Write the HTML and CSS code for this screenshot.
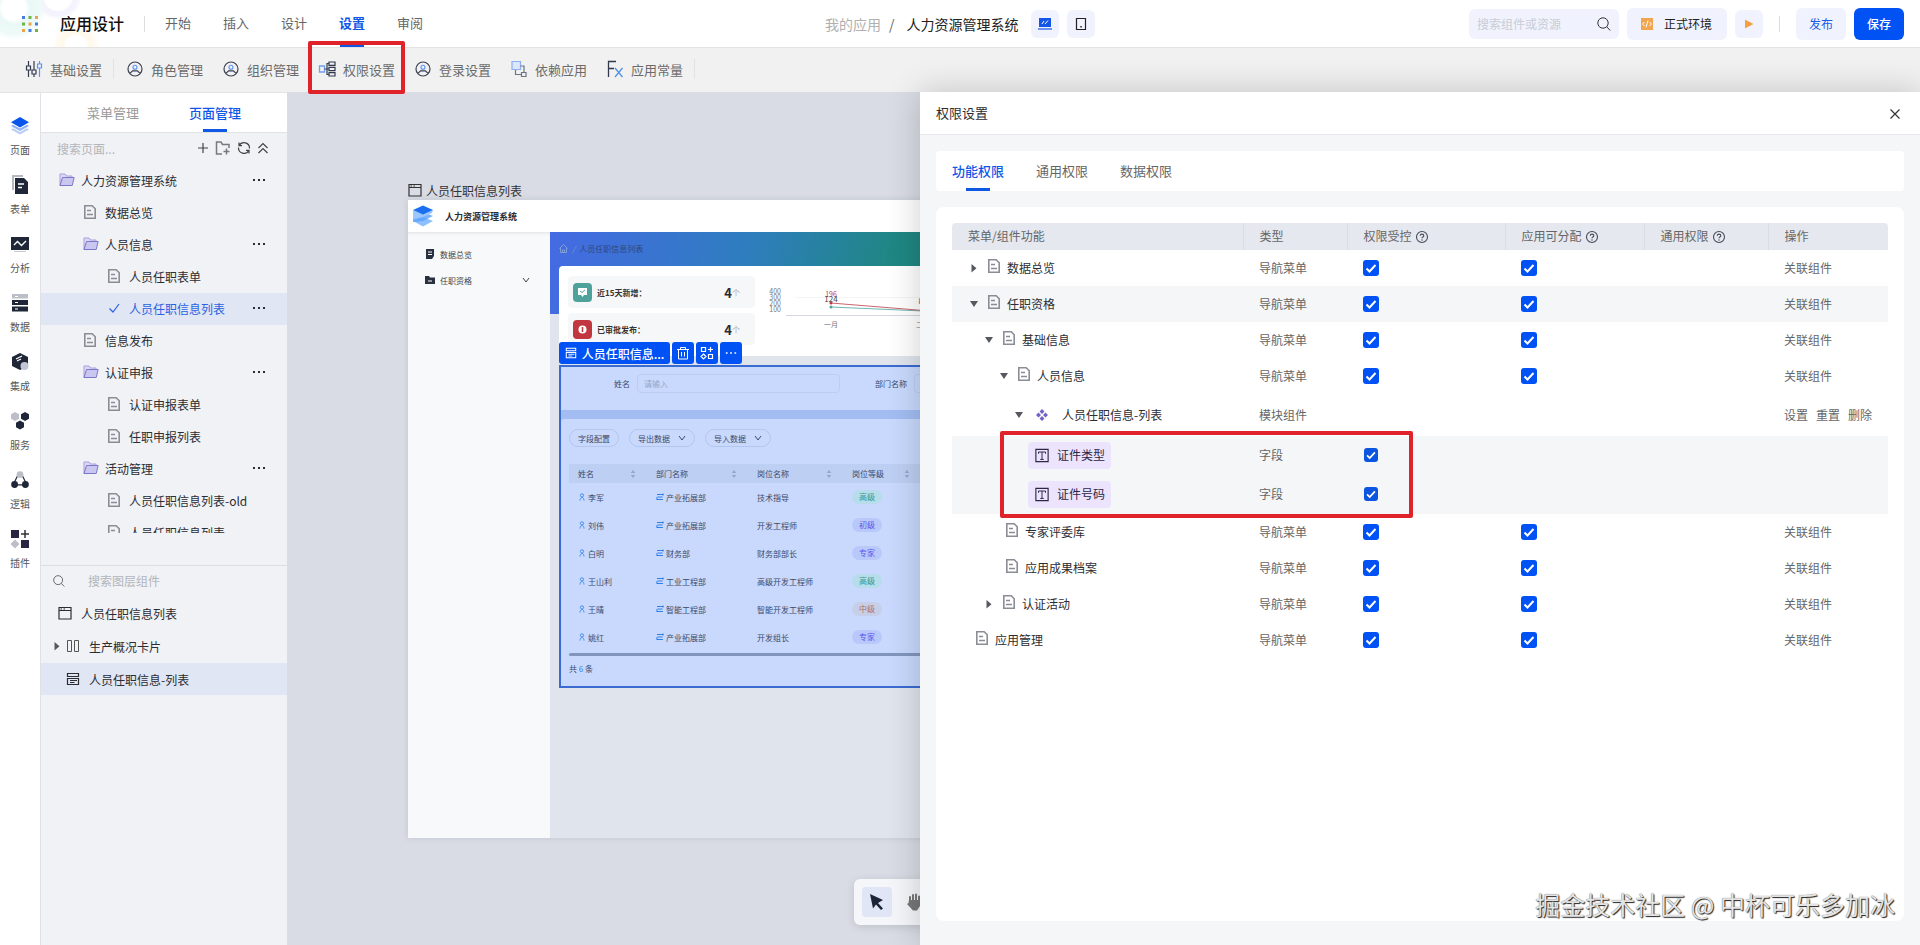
FILE: index.html
```
<!DOCTYPE html>
<html lang="zh-CN">
<head>
    <meta charset="UTF-8">
    <meta name="viewport" content="width=device-width, initial-scale=1.0">
    <title>应用设计 - 人力资源管理系统</title>
    <link rel="stylesheet" href="styles.css">
</head>
<body>
    <!-- Icon sprite -->
    <svg class="sprite" aria-hidden="true">
        <symbol id="i-search" viewBox="0 0 14 14"><circle cx="6" cy="6" r="5.2" fill="none" stroke="currentColor"/><path d="M9.8 9.8l3.4 3.7" stroke="currentColor"/></symbol>
        <symbol id="i-user" viewBox="0 0 18 18"><circle cx="9" cy="9" r="7" fill="none" stroke="#3a3f52" stroke-width="1.2"/><circle cx="9" cy="7.2" r="2" fill="none" stroke="#5b93ee" stroke-width="1.1"/><path d="M4.2 13.2l2.4-2.4h4.8l2.4 2.4" fill="none" stroke="#3a3f52" stroke-width="1.2"/></symbol>
        <symbol id="i-doc" viewBox="0 0 14 16"><path d="M1.8 1.8h7.4l3 3v9.4H1.8z" fill="none" stroke="#8a8d96" stroke-width="1.6"/><path d="M4 6.5h4M4 10.500h6" stroke="#8a8d96" stroke-width="1.4"/></symbol>
        <symbol id="i-folder" viewBox="0 0 16 14"><path d="M1 12.500V1h5l1.500 2H13v2" fill="#dcd8f5" stroke="#a5a0dd"/><path d="M1 12.500L3.500 4.500H15.200l-2 8z" fill="#c9c6f0" stroke="#7d77c8"/></symbol>
        <symbol id="i-dots" viewBox="0 0 14 4"><path d="M1 1h2v2H1zM6 1h2v2H6zM11 1h2v2h-2z" fill="currentColor"/></symbol>
        <symbol id="i-help" viewBox="0 0 14 14"><circle cx="7" cy="7" r="5.500" fill="none" stroke="#444a58" stroke-width="1.100"/><path d="M5.200 5.800c0-2.300 3.600-2.300 3.600 0 0 1.300-1.800 1.200-1.800 2.400" fill="none" stroke="#444a58" stroke-width="1.100"/><circle cx="7" cy="10" r=".7" fill="#444a58"/></symbol>
        <symbol id="i-down" viewBox="0 0 12 12"><path d="M2 3h8l-4 6z" fill="#55585f"/></symbol>
        <symbol id="i-right" viewBox="0 0 12 12"><path d="M3.500 2v8.500L8.500 6.200z" fill="#55585f"/></symbol>
        <symbol id="i-chev" viewBox="0 0 8 8"><path d="M1 2l3 4 3-4" fill="none" stroke="currentColor"/></symbol>
        <symbol id="i-window" viewBox="0 0 14 14"><path d="M1 1.500h12v11.500H1zM1 4.500h12" fill="none" stroke="currentColor" stroke-width="1.200"/><path d="M2.500 3h1.500M5.500 3H7" stroke="currentColor"/></symbol>
        <symbol id="i-list" viewBox="0 0 14 14"><path d="M1.500 1.500h11v3h-11zM1.500 12.500v-6h11v6z" fill="none" stroke="currentColor" stroke-width="1.200"/><path d="M4 8.500h7M4 10.500h4.500" stroke="currentColor"/></symbol>
        <symbol id="i-text" viewBox="0 0 16 16"><path d="M1 1h14v14H1z" fill="none" stroke="#2c2748" stroke-width="1.300"/><path d="M4 6V4h8v2M8 4v8.500M6 12.500h4" fill="none" stroke="#2c2748" stroke-width="1.100"/></symbol>
        <symbol id="i-person" viewBox="0 0 8 10"><circle cx="4" cy="3" r="2" fill="none" stroke="#2f7fe8"/><path d="M1.500 9.500c0-5 5-5 5 0" fill="none" stroke="#2f7fe8"/></symbol>
        <symbol id="i-dept" viewBox="0 0 8 8"><path d="M1 1.500h6.500M1.500 4h5M.5 6.500h6.500M7 .5v2M1 4v2.500" fill="none" stroke="#2f7fe8"/></symbol>
        <symbol id="i-sort" viewBox="0 0 6 8"><path d="M3 0l2.200 3H.8zM3 8L.8 5h4.400z" fill="#93a6cf"/></symbol>
    </svg>

    <header class="topbar">
        <svg class="apps" viewBox="0 0 16 16"><path fill="#4a7be0" d="M0 0h3v3H0zM13 6.500h3v3h-3zM6.500 13h3v3h-3z"/><path fill="#6cb644" d="M6.500 0h3v3h-3zM0 6.500h3v3H0zM13 13h3v3h-3z"/><path fill="#eda34a" d="M13 0h3v3h-3zM6.500 6.500h3v3h-3zM0 13h3v3H0z"/></svg>
        <h1 class="app-title">应用设计</h1>
        <span class="divider"></span>
        <nav class="main-nav">
            <a href="#">开始</a>
            <a href="#">插入</a>
            <a href="#">设计</a>
            <a href="#" class="active">设置</a>
            <a href="#">审阅</a>
        </nav>
        <div class="crumbs">
            <a href="#">我的应用</a>
            <span class="slash">/</span>
            <span class="current">人力资源管理系统</span>
            <button class="icon-btn" aria-label="电脑端"><svg width="14" height="12" viewBox="0 0 14 12"><path d="M1 0h12v9H1z" fill="#1457e8"/><path d="M0 11h14" stroke="#1457e8" stroke-width="1.200"/><path d="M4 6l2-3M7 6l3-3.500" stroke="#fff"/></svg></button>
            <button class="icon-btn" aria-label="移动端"><svg width="12" height="14" viewBox="0 0 12 14"><path d="M1.500 1.500h9v11h-9z" fill="none" stroke="#222" stroke-width="1.200"/><path d="M5.300 9h1.500v1.500H5.300z" fill="#222"/></svg></button>
        </div>
        <div class="actions">
            <label class="search-box">
                <input type="text" placeholder="搜索组件或资源" aria-label="搜索组件或资源">
                <svg width="14" height="14"><use href="#i-search"/></svg>
            </label>
            <button class="env-btn"><svg width="12" height="12" viewBox="0 0 12 12"><path d="M0 0h12v12H0z" fill="#f0a54e"/><path d="M3.500 4L1.500 6l2 2M8.500 4l2 2-2 2M7 2.500l-2 7" fill="none" stroke="#fff"/></svg>正式环境</button>
            <button class="icon-btn" aria-label="运行"><svg width="10" height="10" viewBox="0 0 10 10"><path d="M1 .5L9.500 5 1 9.500z" fill="#f5a142"/></svg></button>
            <span class="divider"></span>
            <button class="publish-btn">发布</button>
            <button class="save-btn">保存</button>
        </div>
    </header>

    <div class="toolbar">
        <a href="#" class="tool"><svg viewBox="0 0 18 18"><path d="M3.500 1v5M3.500 10v7M1.500 6h4v4h-4zM9 1v9M9 14v3M7 10h4v4H7z" fill="none" stroke="#333a4d" stroke-width="1.200"/><path d="M14.500 1v3M14.500 8v9M12.500 4h4v4h-4z" fill="none" stroke="#5b93ee" stroke-width="1.200"/></svg>基础设置</a>
        <span class="tool-line"></span>
        <a href="#" class="tool"><svg><use href="#i-user"/></svg>角色管理</a>
        <a href="#" class="tool"><svg><use href="#i-user"/></svg>组织管理</a>
        <a href="#" class="tool marked"><svg viewBox="0 0 18 18"><path d="M1.500 6h5v6h-5z" fill="none" stroke="#6f9fee" stroke-width="1.300"/><path d="M6.500 9h4M9 9V3.500h2M9 9v5.500h2M11 2h6v3.300h-6zM11 7.300h6v3.400h-6zM11 12.700h6V16h-6z" fill="none" stroke="#333a4d" stroke-width="1.200"/></svg>权限设置</a>
        <a href="#" class="tool"><svg><use href="#i-user"/></svg>登录设置</a>
        <a href="#" class="tool"><svg viewBox="0 0 18 18"><path d="M2 1.500h8.500v8H2z" fill="#dde7fb" stroke="#8daeef" stroke-width="1.200"/><path d="M11.500 12.500H16v4h-4.500zM5.500 10v4.500H11M10.500 6H14v6" fill="none" stroke="#6c7385" stroke-width="1.200"/></svg>依赖应用</a>
        <a href="#" class="tool"><svg viewBox="0 0 18 18"><path d="M2.500 17V1.500H10M2.500 8.500H8" fill="none" stroke="#333a4d" stroke-width="1.300"/><path d="M9 8l7.500 9M16.500 8L9 17" fill="none" stroke="#4d93ea" stroke-width="1.300"/></svg>应用常量</a>
        <span class="tool-line"></span>
    </div>

    <div class="workspace">
        <nav class="rail">
            <button><svg viewBox="0 0 18 20"><path d="M0 13.500l9 5 9-5-2-1.200-7 3.700-7-3.700z" fill="#b9cdf8"/><path d="M0 10l9 5 9-5-2-1.200-7 3.700-7-3.700z" fill="#8fb0f5"/><path d="M9 1l9 5.300-9 5.300-9-5.300z" fill="#0a56ea"/></svg>页面</button>
            <button><svg viewBox="0 0 18 20"><path d="M2 15V1h10" fill="none" stroke="#b4b8c2" stroke-width="2"/><path d="M4 3h9l4 4v12H4z" fill="#1f2637"/><path d="M7 9h6M7 12.500h4" stroke="#fff" stroke-width="1.400"/></svg>表单</button>
            <button><svg viewBox="0 0 18 20"><path d="M0 3h18v13H0z" fill="#1f2637"/><path d="M3 11l3.500-3.500 4 4L15 7" fill="none" stroke="#fff" stroke-width="1.400"/><path d="M3 17.500h12" stroke="#c5c8d0"/></svg>分析</button>
            <button><svg viewBox="0 0 18 20"><path d="M1 1h16v4.500H1z" fill="#bcbfc8"/><path d="M1 7h16v5H1zM1 13.500h16v5H1z" fill="#1f2637"/><path d="M4 3.500h3M4 9.500h3M4 16h3" stroke="#fff" stroke-width="1.200"/></svg>数据</button>
            <button><svg viewBox="0 0 18 20"><path d="M9 1l8 4v9l-8 4-8-4V5z" fill="#1f2637"/><path d="M5 7l6-3M6 9l4-2" stroke="#fff" stroke-width="1.200"/><circle cx="13.500" cy="14" r="4" fill="#c3c5d4"/></svg>集成</button>
            <button><svg viewBox="0 0 18 20"><path d="M4 1l4 2.200v4.600L4 10 0 7.800V3.200z" fill="#bcbfc8"/><path d="M14 1l4 2.200v4.600L14 10l-4-2.200V3.200zM9 9.500l4 2.200v4.600l-4 2.200-4-2.200v-4.600z" fill="#1f2637"/></svg>服务</button>
            <button><svg viewBox="0 0 20 20"><path d="M8 4L3.500 13M12 4l4.500 9M6 15.500h8" stroke="#1f2637" stroke-width="1.300"/><circle cx="10" cy="4" r="3.800" fill="#bcbfc8"/><circle cx="4" cy="15" r="3.800" fill="#1f2637"/><circle cx="16" cy="15" r="3.800" fill="#1f2637"/></svg>逻辑</button>
            <button><svg viewBox="0 0 18 20"><path d="M0 1h8v8H0zM10 11h8v8h-8z" fill="#2a2540"/><path d="M4 10.500l4.500 4.500L4 19.500-.5 15z" fill="#bcbfc8"/><path d="M14 1v8M10 5h8" stroke="#333" stroke-width="1.500"/></svg>插件</button>
        </nav>

        <aside class="panel">
            <div class="panel-tabs">
                <a href="#">菜单管理</a>
                <a href="#" class="active">页面管理</a>
            </div>
            <div class="panel-search">
                <input type="text" placeholder="搜索页面..." aria-label="搜索页面">
                <button aria-label="新增"><svg width="12" height="14" viewBox="0 0 12 14"><path d="M6 2v10M1 7h10" stroke="#444" stroke-width="1.200"/></svg></button>
                <button aria-label="新增分组"><svg width="16" height="14" viewBox="0 0 16 14"><path d="M7 13H1.500V1H6l1.500 2.500H14V7M11.500 7.500v6M8.500 10.500h6" fill="none" stroke="#77797f" stroke-width="1.500"/></svg></button>
                <button aria-label="刷新"><svg width="14" height="14" viewBox="0 0 14 14"><path d="M2.200 4.500A5.500 5.500 0 0 1 12.500 7.500M11.800 9.500A5.500 5.500 0 0 1 1.500 6.500M2 1.500v3.200h3M12 12.500V9.300H9" fill="none" stroke="#444" stroke-width="1.200"/></svg></button>
                <button aria-label="收起"><svg width="12" height="14" viewBox="0 0 12 14"><path d="M1.500 7L6 2.500 10.500 7M1.500 12L6 7.500l4.500 4.500" fill="none" stroke="#444" stroke-width="1.200"/></svg></button>
            </div>
            <ul class="tree">
                <li><svg class="folder"><use href="#i-folder"/></svg><span>人力资源管理系统</span><button aria-label="更多"><svg><use href="#i-dots"/></svg></button></li>
                <li class="lv1"><svg class="doc"><use href="#i-doc"/></svg><span>数据总览</span></li>
                <li class="lv1"><svg class="folder"><use href="#i-folder"/></svg><span>人员信息</span><button aria-label="更多"><svg><use href="#i-dots"/></svg></button></li>
                <li class="lv2"><svg class="doc"><use href="#i-doc"/></svg><span>人员任职表单</span></li>
                <li class="lv2 selected"><svg class="doc" viewBox="0 0 14 16"><path d="M2.500 8.500l3.500 3.500 6-8" fill="none" stroke="#2a62e0" stroke-width="1.200"/></svg><span>人员任职信息列表</span><button aria-label="更多"><svg><use href="#i-dots"/></svg></button></li>
                <li class="lv1"><svg class="doc"><use href="#i-doc"/></svg><span>信息发布</span></li>
                <li class="lv1"><svg class="folder"><use href="#i-folder"/></svg><span>认证申报</span><button aria-label="更多"><svg><use href="#i-dots"/></svg></button></li>
                <li class="lv2"><svg class="doc"><use href="#i-doc"/></svg><span>认证申报表单</span></li>
                <li class="lv2"><svg class="doc"><use href="#i-doc"/></svg><span>任职申报列表</span></li>
                <li class="lv1"><svg class="folder"><use href="#i-folder"/></svg><span>活动管理</span><button aria-label="更多"><svg><use href="#i-dots"/></svg></button></li>
                <li class="lv2"><svg class="doc"><use href="#i-doc"/></svg><span>人员任职信息列表-old</span></li>
                <li class="lv2"><svg class="doc"><use href="#i-doc"/></svg><span>人员任职信息列表</span></li>
            </ul>
            <div class="layers">
                <label class="layer-search">
                    <svg width="12" height="12"><use href="#i-search"/></svg>
                    <input type="text" placeholder="搜索图层组件" aria-label="搜索图层组件">
                </label>
                <ul>
                    <li><svg><use href="#i-window"/></svg>人员任职信息列表</li>
                    <li class="sub has-arrow"><svg class="arrow"><use href="#i-right"/></svg><svg viewBox="0 0 14 14"><path d="M1.500 1.500h4v11h-4zM8.500 1.500h4v11h-4z" fill="none" stroke="#555"/></svg>生产概况卡片</li>
                    <li class="sub selected"><svg><use href="#i-list"/></svg>人员任职信息-列表</li>
                </ul>
            </div>
        </aside>

        <main class="canvas">
            <div class="board-label"><svg width="14" height="14"><use href="#i-window"/></svg>人员任职信息列表</div>
            <div class="board">
                <div class="board-head">
                    <svg width="22" height="22" viewBox="0 0 22 22"><path d="M1 16l10-4 10 4-10 5.500z" fill="#8dc0ff"/><path d="M1 10l10-3 10 4-10 5L1 17z" fill="#5a9ffc" opacity=".8"/><path d="M1 5l10 4 10-4-1 3-9 4-10 2z" fill="#9cc8ff"/><path d="M1 5l10-4.500L21 5l-10 4.500z" fill="#1c70f0"/></svg>
                    <strong>人力资源管理系统</strong>
                </div>
                <div class="board-body">
                    <div class="board-side">
                        <div class="side-item"><svg width="10" height="10" viewBox="0 0 10 10"><path d="M1 0h8v7L7 10H1z" fill="#2b3040"/><path d="M3 3h4M3 5.500h4" stroke="#fff"/></svg>数据总览</div>
                        <div class="side-item"><svg width="10" height="10" viewBox="0 0 10 10"><path d="M0 1h4l1 1.500h5V9H0z" fill="#2b3040"/><path d="M3 6h4" stroke="#fff"/></svg>任职资格<svg class="fold" width="8" height="8"><use href="#i-chev"/></svg></div>
                    </div>
                    <div class="board-main">
                        <div class="board-crumb"><svg width="9" height="9" viewBox="0 0 9 9"><path d="M.5 4.500l4-4 4 4M1.500 4v4.500h6V4M3.500 8.500V6h2v2.500" fill="none" stroke="#7f9fd8"/></svg><i>/</i>人员任职信息列表</div>
                        <div class="overview">
                            <div class="stats">
                                <div class="stat"><svg class="teal" viewBox="0 0 19 19"><path d="M5 5h9v7h-3l-1.500 2L8 12H5z" fill="#fff"/><path d="M7 8l2 1.500L12 7" fill="none" stroke="#4fa19b"/></svg><b>近15天新增：</b><em>4</em><small>个</small></div>
                                <div class="stat"><svg class="red" viewBox="0 0 19 19"><circle cx="9.500" cy="9.500" r="4" fill="#fff"/><path d="M9.500 7v5" stroke="#c2373f" stroke-width="1.500"/></svg><b>已审批发布：</b><em>4</em><small>个</small></div>
                            </div>
                            <svg class="chart" viewBox="0 0 300 80">
                                <g stroke="#f4f5f7"><path d="M30 31.500h270"/></g>
                                <path d="M21 49.500h279" stroke="#d5d8de"/>
                                <g class="axis" text-anchor="end"><text x="16" y="28">400</text><text x="16" y="34">300</text><text x="16" y="40">200</text><text x="16" y="46">100</text></g>
                                <g class="axis" text-anchor="middle"><text x="66" y="61">一月</text><text x="158" y="61">二月</text></g>
                                <path d="M66 41l92 4h100" fill="none" stroke="#6fb7b6"/>
                                <path d="M66 37l92 7.500h100" fill="none" stroke="#c9656c"/>
                                <circle cx="66" cy="41" r="1.500" fill="#4fa19b"/><circle cx="66" cy="37" r="1.500" fill="#c2373f"/>
                                <g text-anchor="middle"><text class="v-red" x="66" y="31">196</text><text class="v-dark" x="66" y="36">124</text><text class="v-dark" x="158" y="38">81</text></g>
                            </svg>
                        </div>
                        <div class="picked">
                            <div class="picked-bar">
                                <button class="picked-name"><svg width="12" height="12"><use href="#i-list"/></svg>人员任职信息...</button>
                                <button aria-label="删除"><svg width="14" height="14" viewBox="0 0 14 14"><path d="M1 3.500h12M4.500 3.500v-2h5v2M2.500 3.500V13h9V3.500M5.500 6v4.500M8.500 6v4.500" fill="none" stroke="#fff"/></svg></button>
                                <button aria-label="组件"><svg width="14" height="14" viewBox="0 0 14 14"><path d="M1.500 1.500h4v4h-4zM8.500 8.500h4v4h-4zM3.500 8l2.500 2.500L3.500 13 1 10.500zM10.500 1v5M8 3.500h5" fill="none" stroke="#fff" stroke-width="1.200"/></svg></button>
                                <button aria-label="更多"><svg width="12" height="4"><use href="#i-dots"/></svg></button>
                            </div>
                            <div class="filters">
                                <label for="f-name">姓名</label><input id="f-name" type="text" placeholder="请输入">
                                <label for="f-dept">部门名称</label><input id="f-dept" type="text">
                            </div>
                            <div class="list-area">
                                <div class="list-btns">
                                    <button>字段配置</button>
                                    <button>导出数据<svg width="8" height="8"><use href="#i-chev"/></svg></button>
                                    <button>导入数据<svg width="8" height="8"><use href="#i-chev"/></svg></button>
                                </div>
                                <table class="staff">
                                    <colgroup><col class="s1"><col class="s2"><col class="s3"><col class="s4"><col></colgroup>
                                    <thead>
                                        <tr><th>姓名<svg><use href="#i-sort"/></svg></th><th>部门名称<svg><use href="#i-sort"/></svg></th><th>岗位名称<svg><use href="#i-sort"/></svg></th><th>岗位等级<svg><use href="#i-sort"/></svg></th><th></th></tr>
                                    </thead>
                                    <tbody>
                                        <tr><td><svg class="p"><use href="#i-person"/></svg>李军</td><td><svg class="d"><use href="#i-dept"/></svg>产业拓展部</td><td>技术指导</td><td><span class="pill green">高级</span></td><td></td></tr>
                                        <tr><td><svg class="p"><use href="#i-person"/></svg>刘伟</td><td><svg class="d"><use href="#i-dept"/></svg>产业拓展部</td><td>开发工程师</td><td><span class="pill violet">初级</span></td><td></td></tr>
                                        <tr><td><svg class="p"><use href="#i-person"/></svg>白明</td><td><svg class="d"><use href="#i-dept"/></svg>财务部</td><td>财务部部长</td><td><span class="pill violet">专家</span></td><td></td></tr>
                                        <tr><td><svg class="p"><use href="#i-person"/></svg>王山利</td><td><svg class="d"><use href="#i-dept"/></svg>工业工程部</td><td>高级开发工程师</td><td><span class="pill green">高级</span></td><td></td></tr>
                                        <tr><td><svg class="p"><use href="#i-person"/></svg>王晴</td><td><svg class="d"><use href="#i-dept"/></svg>智能工程部</td><td>智能开发工程师</td><td><span class="pill brown">中级</span></td><td></td></tr>
                                        <tr><td><svg class="p"><use href="#i-person"/></svg>姚红</td><td><svg class="d"><use href="#i-dept"/></svg>产业拓展部</td><td>开发组长</td><td><span class="pill violet">专家</span></td><td></td></tr>
                                    </tbody>
                                </table>
                                <div class="h-scroll"></div>
                                <p class="total">共 <span>6</span> 条</p>
                            </div>
                        </div>
                    </div>
                </div>
            </div>
            <div class="float-tools">
                <button class="on" aria-label="选择"><svg width="16" height="18" viewBox="0 0 16 18"><path d="M1 1l13 6-5 3 5 5.500-2 1.500-5-5.500-3 4z" fill="#1c2536"/></svg></button>
                <button aria-label="移动"><svg width="18" height="18" viewBox="0 0 18 18"><path d="M4 8V4M7 8V2M10 8V1.500M13 8V3.500" stroke="#777" stroke-width="2" stroke-linecap="round"/><path d="M3 7h11v6l-3 4.500H7L1 11l1.500-1z" fill="#777"/></svg></button>
            </div>
        </main>

        <section class="drawer">
            <div class="drawer-head">
                <h2>权限设置</h2>
                <button aria-label="关闭"><svg width="10" height="10" viewBox="0 0 10 10"><path d="M.5.500l9 9M9.500.500l-9 9" stroke="#333" stroke-width="1.200"/></svg></button>
            </div>
            <div class="drawer-body">
                <nav class="perm-tabs">
                    <a href="#" class="active">功能权限</a>
                    <a href="#">通用权限</a>
                    <a href="#">数据权限</a>
                </nav>
                <div class="perm-card">
                    <table class="perm">
                        <colgroup><col><col class="c-type"><col class="c-ctl"><col class="c-assign"><col class="c-common"><col class="c-op"></colgroup>
                        <thead>
                            <tr>
                                <th>菜单/组件功能</th>
                                <th>类型</th>
                                <th>权限受控<svg><use href="#i-help"/></svg></th>
                                <th>应用可分配<svg><use href="#i-help"/></svg></th>
                                <th>通用权限<svg><use href="#i-help"/></svg></th>
                                <th>操作</th>
                            </tr>
                        </thead>
                        <tbody>
                            <tr>
                                <td><div class="node"><svg class="arrow"><use href="#i-right"/></svg><svg class="doc"><use href="#i-doc"/></svg>数据总览</div></td>
                                <td>导航菜单</td>
                                <td><input type="checkbox" aria-label="数据总览 权限受控" checked></td>
                                <td><input type="checkbox" aria-label="数据总览 应用可分配" checked></td>
                                <td></td>
                                <td><a href="#">关联组件</a></td>
                            </tr>
                            <tr class="shade">
                                <td><div class="node"><svg class="arrow"><use href="#i-down"/></svg><svg class="doc"><use href="#i-doc"/></svg>任职资格</div></td>
                                <td>导航菜单</td>
                                <td><input type="checkbox" aria-label="任职资格 权限受控" checked></td>
                                <td><input type="checkbox" aria-label="任职资格 应用可分配" checked></td>
                                <td></td>
                                <td><a href="#">关联组件</a></td>
                            </tr>
                            <tr>
                                <td><div class="node n1"><svg class="arrow"><use href="#i-down"/></svg><svg class="doc"><use href="#i-doc"/></svg>基础信息</div></td>
                                <td>导航菜单</td>
                                <td><input type="checkbox" aria-label="基础信息 权限受控" checked></td>
                                <td><input type="checkbox" aria-label="基础信息 应用可分配" checked></td>
                                <td></td>
                                <td><a href="#">关联组件</a></td>
                            </tr>
                            <tr>
                                <td><div class="node n2"><svg class="arrow"><use href="#i-down"/></svg><svg class="doc"><use href="#i-doc"/></svg>人员信息</div></td>
                                <td>导航菜单</td>
                                <td><input type="checkbox" aria-label="人员信息 权限受控" checked></td>
                                <td><input type="checkbox" aria-label="人员信息 应用可分配" checked></td>
                                <td></td>
                                <td><a href="#">关联组件</a></td>
                            </tr>
                            <tr class="module">
                                <td><div class="node n3"><svg class="arrow"><use href="#i-down"/></svg><svg class="mod" viewBox="0 0 12 12"><path d="M6 0l2.500 2.500L6 5 3.500 2.500zM6 7l2.500 2.500L6 12 3.500 9.500zM2.500 3.500L5 6 2.500 8.500 0 6zM9.500 3.500L12 6 9.500 8.500 7 6z" fill="#7263c9"/></svg>人员任职信息-列表</div></td>
                                <td>模块组件</td>
                                <td></td>
                                <td></td>
                                <td></td>
                                <td class="ops"><a href="#">设置</a><a href="#">重置</a><a href="#">删除</a></td>
                            </tr>
                            <tr class="shade field">
                                <td class="mark-cell"><span class="tag"><svg><use href="#i-text"/></svg>证件类型</span></td>
                                <td>字段</td>
                                <td><input type="checkbox" class="small" aria-label="证件类型 权限受控" checked></td>
                                <td></td>
                                <td></td>
                                <td></td>
                            </tr>
                            <tr class="shade field">
                                <td><span class="tag"><svg><use href="#i-text"/></svg>证件号码</span></td>
                                <td>字段</td>
                                <td><input type="checkbox" class="small" aria-label="证件号码 权限受控" checked></td>
                                <td></td>
                                <td></td>
                                <td></td>
                            </tr>
                            <tr>
                                <td><div class="node n2 leaf"><svg class="doc"><use href="#i-doc"/></svg>专家评委库</div></td>
                                <td>导航菜单</td>
                                <td><input type="checkbox" aria-label="专家评委库 权限受控" checked></td>
                                <td><input type="checkbox" aria-label="专家评委库 应用可分配" checked></td>
                                <td></td>
                                <td><a href="#">关联组件</a></td>
                            </tr>
                            <tr>
                                <td><div class="node n2 leaf"><svg class="doc"><use href="#i-doc"/></svg>应用成果档案</div></td>
                                <td>导航菜单</td>
                                <td><input type="checkbox" aria-label="应用成果档案 权限受控" checked></td>
                                <td><input type="checkbox" aria-label="应用成果档案 应用可分配" checked></td>
                                <td></td>
                                <td><a href="#">关联组件</a></td>
                            </tr>
                            <tr>
                                <td><div class="node n1"><svg class="arrow"><use href="#i-right"/></svg><svg class="doc"><use href="#i-doc"/></svg>认证活动</div></td>
                                <td>导航菜单</td>
                                <td><input type="checkbox" aria-label="认证活动 权限受控" checked></td>
                                <td><input type="checkbox" aria-label="认证活动 应用可分配" checked></td>
                                <td></td>
                                <td><a href="#">关联组件</a></td>
                            </tr>
                            <tr>
                                <td><div class="node leaf"><svg class="doc"><use href="#i-doc"/></svg>应用管理</div></td>
                                <td>导航菜单</td>
                                <td><input type="checkbox" aria-label="应用管理 权限受控" checked></td>
                                <td><input type="checkbox" aria-label="应用管理 应用可分配" checked></td>
                                <td></td>
                                <td><a href="#">关联组件</a></td>
                            </tr>
                        </tbody>
                    </table>
                </div>
            </div>
        </section>
    </div>

    <div class="watermark">掘金技术社区 @ 中杯可乐多加冰</div>
</body>
</html>
```
FILE: styles.css
```
*,
*::before,
*::after {
    box-sizing: border-box;
    margin: 0;
    padding: 0;
}

body {
    display: flex;
    flex-direction: column;
    height: 100vh;
    overflow: hidden;
    font-family: "Noto Sans CJK SC", "Noto Sans", sans-serif;
    font-size: 12px;
    color: #2b2d33;
    background: #fff;
}

a {
    color: inherit;
    text-decoration: none;
}

button {
    border: none;
    background: none;
    font: inherit;
    color: inherit;
    cursor: pointer;
}

input {
    border: none;
    outline: none;
    background: none;
    font: inherit;
    color: inherit;
    min-width: 0;
}

ul {
    list-style: none;
}

svg {
    flex: none;
}

.sprite {
    position: absolute;
    width: 0;
    height: 0;
}

/* Top bar */
.topbar {
    display: flex;
    align-items: center;
    height: 48px;
    flex: none;
    padding: 0 16px 0 22px;
    border-bottom: 1px solid #e3e3e3;
    background:
        radial-gradient(circle at 14px 8px, transparent 12px, #e9f8f6 16px, #eefaf8 26px, transparent 32px),
        radial-gradient(circle at 58px -4px, transparent 14px, #f3f2fd 16px, #f5f4fd 20px, transparent 24px),
        radial-gradient(circle at 76px 46px, transparent 10px, #fff9ea 13px, #fffaf0 18px, transparent 24px),
        #fff;
}

.apps {
    width: 16px;
    height: 16px;
}

.app-title {
    margin-left: 22px;
    padding-bottom: 2px;
    font-size: 16px;
    font-weight: 500;
    color: #111;
}

.divider {
    width: 1px;
    height: 16px;
    background: #dcdcdc;
}

.app-title + .divider {
    margin: 0 20px;
}

.main-nav {
    display: flex;
    align-self: stretch;
    gap: 32px;
    font-size: 13px;
    color: #666;
}

.main-nav a {
    display: flex;
    align-items: center;
    padding-bottom: 2px;
}

.main-nav .active {
    color: #1057e6;
    font-weight: 700;
    background: linear-gradient(#1057e6, #1057e6) center bottom / 24px 3px no-repeat;
}

.crumbs {
    display: flex;
    align-items: center;
    gap: 8px;
    margin-left: 402px;
    font-size: 14px;
}

.crumbs a {
    color: #b0b0b0;
}

.crumbs .slash {
    color: #666;
}

.crumbs .current {
    margin: 0 4px;
    color: #222;
}

.icon-btn {
    display: flex;
    align-items: center;
    justify-content: center;
    width: 28px;
    height: 28px;
    border-radius: 6px;
    background: #f0f3fe;
}

.actions {
    display: flex;
    align-items: center;
    gap: 8px;
    margin-left: auto;
}

.actions .divider {
    margin: 0 8px;
}

.search-box {
    display: flex;
    align-items: center;
    width: 150px;
    height: 30px;
    padding: 0 8px;
    border-radius: 6px;
    background: #f0f3fd;
    color: #333;
}

.search-box input {
    flex: 1;
}

.search-box ::placeholder {
    color: #c9ccd6;
}

.env-btn {
    display: flex;
    align-items: center;
    gap: 11px;
    height: 32px;
    padding: 0 15px 0 14px;
    border-radius: 6px;
    background: #f0f3fe;
    color: #222;
}

.publish-btn,
.save-btn {
    width: 50px;
    height: 32px;
    border-radius: 6px;
    background: #f0f3fe;
    color: #1a5ce8;
}

.save-btn {
    background: #0052f5;
    color: #fff;
    font-weight: 500;
}

/* Settings toolbar */
.toolbar {
    display: flex;
    align-items: center;
    height: 44px;
    flex: none;
    padding: 0 0 2px 25px;
    background: #f1f1f1;
    font-size: 13px;
    color: #6b6b6b;
}

.tool {
    position: relative;
    display: flex;
    align-items: center;
    gap: 7px;
    margin-right: 19px;
}

.tool svg {
    width: 18px;
    height: 18px;
}

.tool-line {
    width: 1px;
    height: 20px;
    margin: 0 12px 0 -8px;
    background: #e2e2e2;
}

/* Red marker around the permission entry */
.marked::after {
    content: "";
    position: absolute;
    top: -19px;
    left: -10px;
    right: -10px;
    z-index: 5;
    height: 53px;
    border: 4px solid #e0222b;
    border-radius: 2px;
}

/* Workspace */
.workspace {
    display: flex;
    flex: 1;
    min-height: 0;
}

.rail {
    display: flex;
    flex-direction: column;
    gap: 17px;
    width: 41px;
    flex: none;
    padding-top: 23px;
    border-right: 1px solid #dfe1e6;
    border-top: 1px solid #e3e3e3;
    background: #fff;
}

.rail button {
    display: flex;
    flex-direction: column;
    align-items: center;
    gap: 6px;
    height: 42px;
    font-size: 10px;
    line-height: 16px;
    color: #555;
}

.rail svg {
    width: 18px;
    height: 20px;
}

.panel {
    display: flex;
    flex-direction: column;
    width: 246px;
    flex: none;
    background: #f0f2f6;
}

.panel-tabs {
    display: flex;
    height: 41px;
    padding: 0 21px;
    border-top: 1px solid #e3e3e3;
    border-bottom: 1px solid #e0e2e6;
    background: #fff;
    font-size: 13px;
    color: #999;
}

.panel-tabs a {
    display: flex;
    flex: 1;
    align-items: center;
    justify-content: center;
}

.panel-tabs .active {
    color: #1057e6;
    font-weight: 500;
    background: linear-gradient(#1057e6, #1057e6) center bottom / 24px 3px no-repeat;
}

.panel-search {
    display: flex;
    align-items: center;
    gap: 6px;
    height: 32px;
    padding: 0 18px 2px 16px;
}

.panel-search input {
    flex: 1;
}

.panel-search button {
    display: flex;
}

.panel ::placeholder {
    color: #b3b5ba;
}

.tree {
    height: 368px;
    overflow: hidden;
}

.tree li {
    display: flex;
    align-items: center;
    gap: 6px;
    height: 32px;
    padding: 0 21px 2px 18px;
    white-space: nowrap;
}

.tree .lv1 {
    padding-left: 42px;
}

.tree .lv2 {
    padding-left: 66px;
}

.tree svg {
    width: 16px;
    height: 14px;
}

.tree button {
    display: flex;
    margin-left: auto;
}

.tree button svg {
    width: 14px;
    height: 4px;
}

.tree .doc {
    width: 14px;
    height: 16px;
    margin-right: 2px;
}

.tree .selected,
.layers .selected {
    background: #e0e6f4;
}

.tree .selected span {
    color: #2a62e0;
}

.layers {
    margin-top: 32px;
    border-top: 1px solid #dcdee3;
}

.layer-search {
    display: flex;
    align-items: center;
    gap: 23px;
    height: 31px;
    padding: 0 0 2px 12px;
    color: #555;
}

.layers ul {
    display: grid;
    gap: 1px;
}

.layers li {
    display: flex;
    align-items: center;
    gap: 9px;
    height: 32px;
    padding-left: 17px;
}

.layers li.sub {
    padding-left: 25px;
}

.layers li.has-arrow {
    padding-left: 10px;
    gap: 3px;
}

.layers .has-arrow svg:last-of-type {
    margin-right: 6px;
}

.layers li svg {
    width: 14px;
    height: 14px;
}

.layers li .arrow {
    width: 12px;
    height: 12px;
}

/* Design canvas */
.canvas {
    position: relative;
    flex: 1;
    min-width: 0;
    overflow: hidden;
    padding: 88px 0 0 121px;
    background: #d9dce4;
}

.board-label {
    display: flex;
    align-items: center;
    gap: 4px;
    height: 20px;
    color: #333;
}

/* The artboard keeps its own size and is cut off by the canvas */
.board {
    width: 1200px;
    background: #e0e4ed;
    font-size: 8px;
    box-shadow: 0 0 6px rgba(60, 70, 100, 0.15);
}

.board-head {
    display: flex;
    align-items: center;
    gap: 11px;
    height: 32px;
    padding-left: 4px;
    background: #fff;
    font-size: 9px;
}

.board-body {
    display: flex;
    height: 606px;
}

.board-side {
    width: 142px;
    padding-top: 9px;
    background: #f7f9fa;
    box-shadow: inset 0 4px 4px -4px rgba(0, 0, 0, 0.15);
}

.side-item {
    display: flex;
    align-items: center;
    gap: 5px;
    height: 26px;
    padding: 0 20px 0 17px;
    color: #444;
}

.side-item .fold {
    margin-left: auto;
}

.board-main {
    flex: 1;
    padding-left: 9px;
    background: linear-gradient(105deg, #456ae4 0, #2f7dc0 190px, #1f8782 340px, #1c8580) top left / 100% 82px no-repeat;
}

.board-crumb {
    display: flex;
    align-items: center;
    gap: 4px;
    height: 34px;
    padding-bottom: 2px;
    color: #30487c;
}

.board-crumb i {
    color: #7f9fd8;
}

.overview {
    display: flex;
    height: 90px;
    padding: 10px 9px;
    border-radius: 4px;
    background: #fff;
}

.stats {
    display: grid;
    gap: 5px;
    width: 187px;
    height: 69px;
}

.stat {
    display: flex;
    align-items: center;
    padding: 0 15px 0 5px;
    border-radius: 4px;
    background: #f6f7f9;
    white-space: nowrap;
}

.stat svg {
    width: 19px;
    height: 19px;
    margin-right: 5px;
    border-radius: 4px;
}

.stat .teal {
    background: #4fa19b;
}

.stat .red {
    background: #c2373f;
}

.stat b {
    font-weight: 700;
    color: #333;
}

.stat em {
    margin-left: auto;
    font-size: 13px;
    font-style: normal;
    font-weight: 700;
}

.stat small {
    font-size: 8px;
    color: #aaa;
}

.chart {
    width: 300px;
    height: 80px;
    margin-left: 10px;
    margin-top: -10px;
}

.chart .axis {
    font-size: 7px;
    fill: #777;
}

.chart .v-red {
    font-size: 7px;
    fill: #c2373f;
}

.chart .v-dark {
    font-size: 8px;
    fill: #444;
}

/* Selected component */
.picked {
    position: relative;
    height: 323px;
    margin-top: 9px;
    border: 2px solid #3a6bd0;
    background: #a3bdf3;
    color: #3c4a6b;
}

.picked-bar {
    position: absolute;
    left: -2px;
    top: -25px;
    display: flex;
    gap: 2px;
    color: #fff;
}

.picked-bar button {
    display: flex;
    align-items: center;
    justify-content: center;
    width: 22px;
    height: 22px;
    border-radius: 3px;
    background: #0052f5;
}

.picked-bar .picked-name {
    gap: 5px;
    width: 111px;
    font-size: 12px;
    font-weight: 500;
}

.filters {
    display: flex;
    align-items: flex-start;
    height: 43px;
    padding: 7px 0 0 53px;
    background: #c8d9fd;
    line-height: 19px;
}

.filters input {
    width: 203px;
    height: 19px;
    margin: 0 35px 0 7px;
    padding: 0 6px;
    border: 1px solid #bccdf1;
    border-radius: 4px;
}

.filters ::placeholder {
    color: #96a6cb;
}

.list-area {
    height: 267px;
    margin-top: 9px;
    padding: 10px 8px 0;
    border-radius: 3px 3px 0 0;
    background: #c8d9fd;
}

.list-btns {
    display: flex;
    gap: 10px;
    height: 18px;
    margin-bottom: 17px;
}

.list-btns button {
    display: flex;
    align-items: center;
    gap: 8px;
    padding: 0 8px;
    border: 1px solid #b3c6ee;
    border-radius: 9px;
}

.staff {
    width: 100%;
    table-layout: fixed;
    border-collapse: collapse;
    text-align: left;
}

.staff .s1 { width: 78px; }
.staff .s2 { width: 101px; }
.staff .s3 { width: 95px; }
.staff .s4 { width: 78px; }

.staff th {
    height: 19px;
    padding-left: 9px;
    background: #bdcff3;
    font-weight: 400;
}

.staff th svg {
    float: right;
    width: 6px;
    height: 8px;
    margin: 2px 11px 0 0;
}

.staff td {
    height: 28px;
    padding-left: 9px;
}

.staff td svg {
    width: 8px;
    height: 8px;
    margin-right: 2px;
}

.pill {
    display: inline-block;
    padding: 0 7px;
    border-radius: 8px;
    line-height: 14px;
}

.pill.green {
    color: #2f9a94;
    background: #b7dcea;
}

.pill.violet {
    color: #5a55e8;
    background: #b9c8fb;
}

.pill.brown {
    color: #b26f6c;
    background: #c7cfe8;
}

.h-scroll {
    height: 3px;
    margin-top: 2px;
    border-radius: 2px;
    background: #8296bd;
}

.total {
    margin-top: 7px;
}

.total span {
    color: #2f7fe8;
}

.float-tools {
    position: absolute;
    left: 567px;
    bottom: 20px;
    display: flex;
    gap: 8px;
    padding: 8px;
    border-radius: 6px;
    background: #f5f6f9;
    box-shadow: 0 2px 8px rgba(0, 0, 0, 0.12);
}

.float-tools button {
    display: flex;
    align-items: center;
    justify-content: center;
    width: 30px;
    height: 30px;
    border-radius: 4px;
}

.float-tools .on {
    background: #e0e6f6;
}

/* Permission drawer */
.drawer {
    position: relative;
    z-index: 2;
    display: flex;
    flex-direction: column;
    flex: 0 0 1000px;
    background: #f4f6f8;
    box-shadow: 0 0 32px rgba(0, 0, 0, 0.2);
}

.drawer-head {
    display: flex;
    align-items: center;
    justify-content: space-between;
    height: 43px;
    padding: 0 20px 0 16px;
    border-bottom: 1px solid #e6e8eb;
    background: #fff;
}

.drawer-head h2 {
    padding-bottom: 2px;
    font-size: 13px;
    font-weight: 400;
}

.drawer-head button {
    display: flex;
    padding-top: 2px;
}

.drawer-body {
    display: flex;
    flex-direction: column;
    flex: 1;
    gap: 16px;
    padding: 16px 16px 24px;
}

.perm-tabs {
    display: flex;
    gap: 32px;
    height: 40px;
    padding: 0 16px;
    border-radius: 4px;
    background: #fff;
    font-size: 13px;
    color: #666;
}

.perm-tabs a {
    display: flex;
    align-items: center;
    padding-bottom: 2px;
}

.perm-tabs .active {
    color: #1057e6;
    font-weight: 500;
    background: linear-gradient(#1057e6, #1057e6) center bottom / 24px 3px no-repeat;
}

.perm-card {
    flex: 1;
    padding: 16px;
    border-radius: 8px;
    background: #fff;
}

.perm {
    width: 100%;
    table-layout: fixed;
    border-collapse: collapse;
    line-height: 16px;
    text-align: left;
    color: #666;
}

.perm .c-type { width: 104px; }
.perm .c-ctl { width: 158px; }
.perm .c-assign { width: 139px; }
.perm .c-common { width: 124px; }
.perm .c-op { width: 120px; }

.perm th {
    height: 27px;
    padding: 0 16px 2px;
    background: #e5e8ee;
    border-right: 1px solid #dadde4;
    font-weight: 400;
    white-space: nowrap;
}

.perm th:first-child {
    border-radius: 4px 0 0 0;
}

.perm th:last-child {
    border-right: none;
    border-radius: 0 4px 0 0;
}

.perm th svg {
    width: 14px;
    height: 14px;
    margin-left: 3px;
    vertical-align: -3px;
}

.perm td {
    height: 36px;
    padding: 0 16px 1px;
    white-space: nowrap;
}

.perm .module td {
    height: 42px;
}

.perm .field td {
    height: 39px;
}

.shade {
    background: #f4f6f8;
}

.node {
    display: flex;
    align-items: center;
    color: #2b2d33;
}

.node.n1 { padding-left: 15px; }
.node.n2 { padding-left: 30px; }
.node.n3 { padding-left: 45px; }

.node .arrow {
    width: 12px;
    height: 12px;
    margin-right: 7px;
}

.node .doc {
    width: 14px;
    height: 16px;
    margin: 0 6px 3px 0;
}

.node.leaf .doc {
    margin-left: 7px;
}

.node .mod {
    width: 12px;
    height: 12px;
    margin: 0 14px 0 4px;
}

.perm input[type="checkbox"] {
    display: block;
    width: 16px;
    height: 16px;
    appearance: none;
    border-radius: 3px;
    background: #0052f5 url("data:image/svg+xml,%3Csvg xmlns='http://www.w3.org/2000/svg' viewBox='0 0 16 16'%3E%3Cpath d='M3.500 8.500l3 3 6-6.500' fill='none' stroke='%23fff' stroke-width='2'/%3E%3C/svg%3E") center / 16px no-repeat;
}

.perm input[type="checkbox"].small {
    width: 14px;
    height: 14px;
    margin-left: 1px;
    background-color: #0b55e0;
    background-size: 14px;
}

.ops a {
    margin-right: 8px;
}

.tag {
    display: inline-flex;
    align-items: center;
    gap: 8px;
    height: 27px;
    margin-left: 60px;
    padding: 0 6px 0 7px;
    border-radius: 4px;
    background: #ebe4fc;
    color: #2b2748;
    vertical-align: middle;
}

.tag svg {
    width: 14px;
    height: 15px;
}

/* Red marker around the field rows */
.mark-cell {
    position: relative;
}

.mark-cell::after {
    content: "";
    position: absolute;
    left: 48px;
    top: -5px;
    width: 413px;
    height: 87px;
    border: 4px solid #e0222b;
    border-radius: 2px;
}

.watermark {
    position: absolute;
    right: 25px;
    bottom: 23px;
    z-index: 10;
    font-size: 25px;
    line-height: 36px;
    color: #e4e4e4;
    text-shadow: 1px 1px 1px #222, 0 0 1px #555;
}
```
